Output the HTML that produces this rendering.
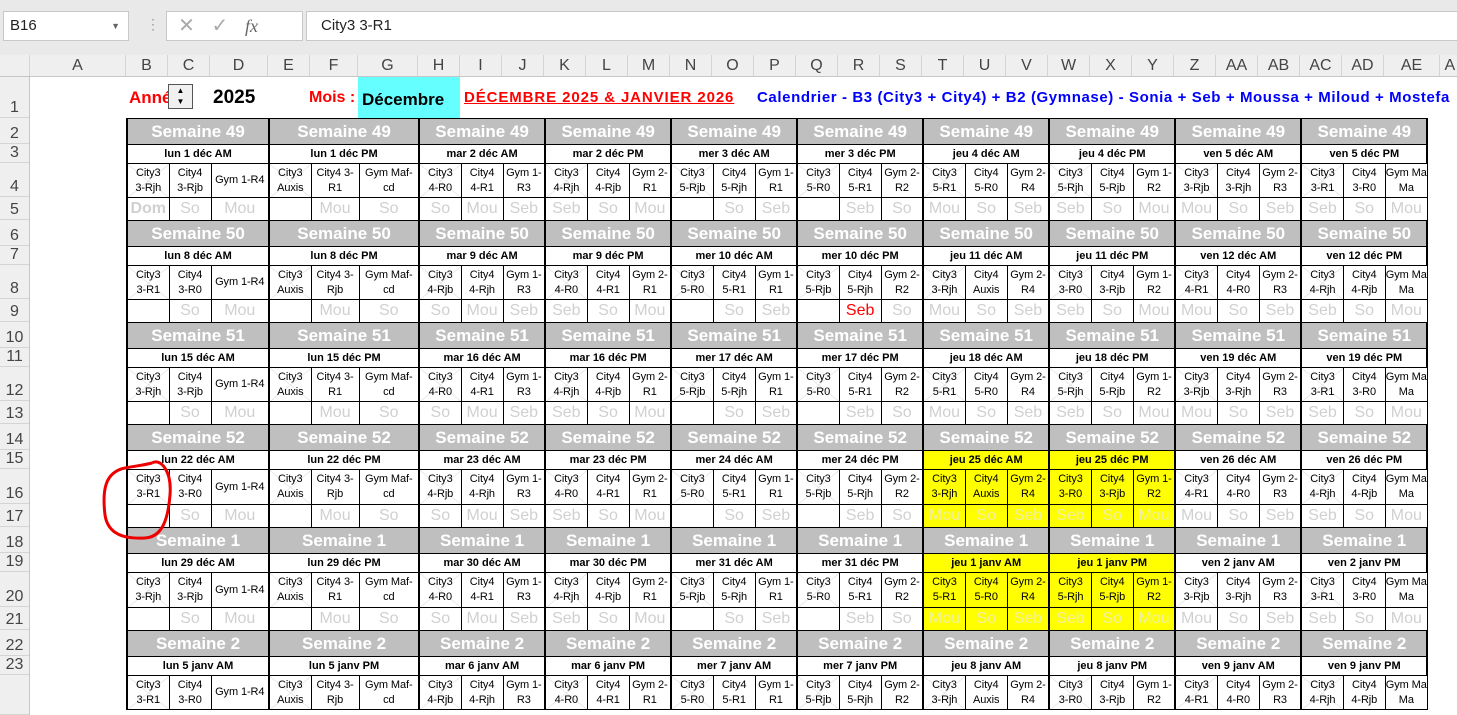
<!DOCTYPE html>
<html><head><meta charset="utf-8"><style>
*{box-sizing:border-box}
body{margin:0;width:1457px;height:687px;overflow:hidden;background:#fff;font-family:"Liberation Sans",sans-serif;position:relative}
.top{position:absolute;left:0;top:0;width:1457px;height:55px;background:#e9e9e9}
.box{position:absolute;background:#fff;border:1px solid #c8c8c8}
.ch{position:absolute;top:55px;left:0;height:22px;display:flex;background:#efefef;border-bottom:1px solid #c6c6c6}
.ch div{border-right:1px solid #d4d4d4;text-align:center;font-size:16px;color:#444;line-height:22px;flex:none}
.rh{position:absolute;left:0;top:77px;width:30px;display:flex;flex-direction:column;background:#efefef;border-right:1px solid #c6c6c6}
.rh div{border-bottom:1px solid #d4d4d4;font-size:16px;color:#444;text-align:center;display:flex;align-items:flex-end;justify-content:center;flex:none;line-height:18px}
table{position:absolute;left:126px;top:118px;border-collapse:collapse;table-layout:fixed;width:1314px}
td{border:1px solid #000;padding:0;text-align:center;overflow:hidden;white-space:nowrap}
tr.s td{background:#bfbfbf;color:#fff;font-weight:bold;font-size:17px;height:26px;border-left:2px solid #000;border-right:2px solid #000}
tr.d td{font-weight:bold;font-size:11px;height:19px;border-left:2px solid #000;border-right:2px solid #000}
tr.c td{font-size:11px;line-height:15px;height:34px;letter-spacing:-0.1px}
tr.c.t td{height:35px}
tr.n td{font-size:16px;color:#d0d0d0;height:23px}
td.g{border-left:2px solid #000}
td.x{background:linear-gradient(to top right,transparent calc(50% - .6px),#ddd 50%,transparent calc(50% + .6px)),linear-gradient(to bottom right,transparent calc(50% - .6px),#ddd 50%,transparent calc(50% + .6px))}
td.y,td.x.y{background:#ffff00}
tr.n td.y{color:#f0f0a0}
</style></head><body>
<div class="top"></div>
<div class="box" style="left:3px;top:11px;width:126px;height:30px;font-size:15px;line-height:28px;padding-left:6px;color:#222">B16<span style="position:absolute;right:8px;top:0;font-size:9px;color:#666">▼</span></div>
<div style="position:absolute;left:146px;top:16px;color:#999;font-size:14px">⋮</div>
<div class="box" style="left:166px;top:11px;width:137px;height:30px;color:#aaa;font-size:20px;line-height:28px">&nbsp;&nbsp;✕&nbsp;&nbsp;&nbsp;✓&nbsp;&nbsp;&nbsp;<i style="font-family:'Liberation Serif',serif;color:#666;font-size:18px">fx</i></div>
<div class="box" style="left:306px;top:11px;width:1160px;height:30px;font-size:15px;line-height:28px;padding-left:14px;color:#222">City3 3-R1</div>
<div class="ch"><div style="width:30px"></div><div style="width:96px">A</div><div style="width:42px">B</div><div style="width:42px">C</div><div style="width:58px">D</div><div style="width:42px">E</div><div style="width:48px">F</div><div style="width:60px">G</div><div style="width:42px">H</div><div style="width:42px">I</div><div style="width:42px">J</div><div style="width:42px">K</div><div style="width:42px">L</div><div style="width:42px">M</div><div style="width:42px">N</div><div style="width:42px">O</div><div style="width:42px">P</div><div style="width:42px">Q</div><div style="width:42px">R</div><div style="width:42px">S</div><div style="width:42px">T</div><div style="width:42px">U</div><div style="width:42px">V</div><div style="width:42px">W</div><div style="width:42px">X</div><div style="width:42px">Y</div><div style="width:42px">Z</div><div style="width:42px">AA</div><div style="width:42px">AB</div><div style="width:42px">AC</div><div style="width:42px">AD</div><div style="width:56px">AE</div><div style="width:40px;text-align:left">&nbsp;A</div></div>
<div class="rh">
<div style="height:41px">1</div>
<div style="height:26px">2</div><div style="height:19px">3</div><div style="height:34px">4</div><div style="height:23px">5</div>
<div style="height:26px">6</div><div style="height:19px">7</div><div style="height:34px">8</div><div style="height:23px">9</div>
<div style="height:26px">10</div><div style="height:19px">11</div><div style="height:34px">12</div><div style="height:23px">13</div>
<div style="height:26px">14</div><div style="height:19px">15</div><div style="height:35px">16</div><div style="height:23px">17</div>
<div style="height:26px">18</div><div style="height:19px">19</div><div style="height:35px">20</div><div style="height:23px">21</div>
<div style="height:26px">22</div><div style="height:19px">23</div><div style="height:40px"></div>
</div>
<div style="position:absolute;left:129px;top:88px;color:#f00;font-weight:bold;font-size:17px">Année :</div>
<div style="position:absolute;left:168px;top:84px;width:25px;height:25px;background:#f0f0f0;border:1px solid #555;font-size:8px;line-height:11px;text-align:center">▲<br>▼</div>
<div style="position:absolute;left:213px;top:87px;font-weight:bold;font-size:19px">2025</div>
<div style="position:absolute;left:309px;top:89px;color:#f00;font-weight:bold;font-size:16px">Mois :</div>
<div style="position:absolute;left:358px;top:77px;width:102px;height:41px;background:#66ffff;font-weight:bold;font-size:17px;padding:13px 0 0 4px">Décembre</div>
<div style="position:absolute;left:464px;top:89px;color:#f00;font-weight:bold;font-size:15px;letter-spacing:0.9px;text-decoration:underline">DÉCEMBRE 2025 &amp; JANVIER 2026</div>
<div style="position:absolute;left:757px;top:89px;color:#00f;font-weight:bold;font-size:15px;white-space:nowrap;letter-spacing:0.6px">Calendrier - B3 (City3 + City4) + B2 (Gymnase) - Sonia + Seb + Moussa + Miloud + Mostefa</div>
<table>
<colgroup><col style="width:42px"><col style="width:42px"><col style="width:58px"><col style="width:42px"><col style="width:48px"><col style="width:60px"><col span="24" style="width:42px"><col style="width:56px"></colgroup>
<tr class="s"><td colspan="3">Semaine 49</td><td colspan="3">Semaine 49</td><td colspan="3">Semaine 49</td><td colspan="3">Semaine 49</td><td colspan="3">Semaine 49</td><td colspan="3">Semaine 49</td><td colspan="3">Semaine 49</td><td colspan="3">Semaine 49</td><td colspan="3">Semaine 49</td><td colspan="3">Semaine 49</td></tr>
<tr class="d"><td colspan="3">lun 1 déc AM</td><td colspan="3">lun 1 déc PM</td><td colspan="3">mar 2 déc AM</td><td colspan="3">mar 2 déc PM</td><td colspan="3">mer 3 déc AM</td><td colspan="3">mer 3 déc PM</td><td colspan="3">jeu 4 déc AM</td><td colspan="3">jeu 4 déc PM</td><td colspan="3">ven 5 déc AM</td><td colspan="3">ven 5 déc PM</td></tr>
<tr class="c"><td class="g x">City3<br>3-Rjh</td><td>City4<br>3-Rjb</td><td>Gym 1-R4</td><td class="g x">City3<br>Auxis</td><td>City4 3-<br>R1</td><td>Gym Maf-<br>cd</td><td class="g x">City3<br>4-R0</td><td>City4<br>4-R1</td><td>Gym 1-<br>R3</td><td class="g x">City3<br>4-Rjh</td><td>City4<br>4-Rjb</td><td>Gym 2-<br>R1</td><td class="g x">City3<br>5-Rjb</td><td>City4<br>5-Rjh</td><td>Gym 1-<br>R1</td><td class="g x">City3<br>5-R0</td><td>City4<br>5-R1</td><td>Gym 2-<br>R2</td><td class="g x">City3<br>5-R1</td><td>City4<br>5-R0</td><td>Gym 2-<br>R4</td><td class="g x">City3<br>5-Rjh</td><td>City4<br>5-Rjb</td><td>Gym 1-<br>R2</td><td class="g x">City3<br>3-Rjb</td><td>City4<br>3-Rjh</td><td>Gym 2-<br>R3</td><td class="g x">City3<br>3-R1</td><td>City4<br>3-R0</td><td>Gym Maf-<br>Ma</td></tr>
<tr class="n"><td class="g" style="font-weight:bold">Dom</td><td>So</td><td>Mou</td><td class="g"></td><td>Mou</td><td>So</td><td class="g">So</td><td>Mou</td><td>Seb</td><td class="g">Seb</td><td>So</td><td>Mou</td><td class="g"></td><td>So</td><td>Seb</td><td class="g"></td><td>Seb</td><td>So</td><td class="g">Mou</td><td>So</td><td>Seb</td><td class="g">Seb</td><td>So</td><td>Mou</td><td class="g">Mou</td><td>So</td><td>Seb</td><td class="g">Seb</td><td>So</td><td>Mou</td></tr>
<tr class="s"><td colspan="3">Semaine 50</td><td colspan="3">Semaine 50</td><td colspan="3">Semaine 50</td><td colspan="3">Semaine 50</td><td colspan="3">Semaine 50</td><td colspan="3">Semaine 50</td><td colspan="3">Semaine 50</td><td colspan="3">Semaine 50</td><td colspan="3">Semaine 50</td><td colspan="3">Semaine 50</td></tr>
<tr class="d"><td colspan="3">lun 8 déc AM</td><td colspan="3">lun 8 déc PM</td><td colspan="3">mar 9 déc AM</td><td colspan="3">mar 9 déc PM</td><td colspan="3">mer 10 déc AM</td><td colspan="3">mer 10 déc PM</td><td colspan="3">jeu 11 déc AM</td><td colspan="3">jeu 11 déc PM</td><td colspan="3">ven 12 déc AM</td><td colspan="3">ven 12 déc PM</td></tr>
<tr class="c"><td class="g x">City3<br>3-R1</td><td>City4<br>3-R0</td><td>Gym 1-R4</td><td class="g x">City3<br>Auxis</td><td>City4 3-<br>Rjb</td><td>Gym Maf-<br>cd</td><td class="g x">City3<br>4-Rjb</td><td>City4<br>4-Rjh</td><td>Gym 1-<br>R3</td><td class="g x">City3<br>4-R0</td><td>City4<br>4-R1</td><td>Gym 2-<br>R1</td><td class="g x">City3<br>5-R0</td><td>City4<br>5-R1</td><td>Gym 1-<br>R1</td><td class="g x">City3<br>5-Rjb</td><td>City4<br>5-Rjh</td><td>Gym 2-<br>R2</td><td class="g x">City3<br>3-Rjh</td><td>City4<br>Auxis</td><td>Gym 2-<br>R4</td><td class="g x">City3<br>3-R0</td><td>City4<br>3-Rjb</td><td>Gym 1-<br>R2</td><td class="g x">City3<br>4-R1</td><td>City4<br>4-R0</td><td>Gym 2-<br>R3</td><td class="g x">City3<br>4-Rjh</td><td>City4<br>4-Rjb</td><td>Gym Maf-<br>Ma</td></tr>
<tr class="n"><td class="g"></td><td>So</td><td>Mou</td><td class="g"></td><td>Mou</td><td>So</td><td class="g">So</td><td>Mou</td><td>Seb</td><td class="g">Seb</td><td>So</td><td>Mou</td><td class="g"></td><td>So</td><td>Seb</td><td class="g"></td><td style="color:#f00">Seb</td><td>So</td><td class="g">Mou</td><td>So</td><td>Seb</td><td class="g">Seb</td><td>So</td><td>Mou</td><td class="g">Mou</td><td>So</td><td>Seb</td><td class="g">Seb</td><td>So</td><td>Mou</td></tr>
<tr class="s"><td colspan="3">Semaine 51</td><td colspan="3">Semaine 51</td><td colspan="3">Semaine 51</td><td colspan="3">Semaine 51</td><td colspan="3">Semaine 51</td><td colspan="3">Semaine 51</td><td colspan="3">Semaine 51</td><td colspan="3">Semaine 51</td><td colspan="3">Semaine 51</td><td colspan="3">Semaine 51</td></tr>
<tr class="d"><td colspan="3">lun 15 déc AM</td><td colspan="3">lun 15 déc PM</td><td colspan="3">mar 16 déc AM</td><td colspan="3">mar 16 déc PM</td><td colspan="3">mer 17 déc AM</td><td colspan="3">mer 17 déc PM</td><td colspan="3">jeu 18 déc AM</td><td colspan="3">jeu 18 déc PM</td><td colspan="3">ven 19 déc AM</td><td colspan="3">ven 19 déc PM</td></tr>
<tr class="c"><td class="g x">City3<br>3-Rjh</td><td>City4<br>3-Rjb</td><td>Gym 1-R4</td><td class="g x">City3<br>Auxis</td><td>City4 3-<br>R1</td><td>Gym Maf-<br>cd</td><td class="g x">City3<br>4-R0</td><td>City4<br>4-R1</td><td>Gym 1-<br>R3</td><td class="g x">City3<br>4-Rjh</td><td>City4<br>4-Rjb</td><td>Gym 2-<br>R1</td><td class="g x">City3<br>5-Rjb</td><td>City4<br>5-Rjh</td><td>Gym 1-<br>R1</td><td class="g x">City3<br>5-R0</td><td>City4<br>5-R1</td><td>Gym 2-<br>R2</td><td class="g x">City3<br>5-R1</td><td>City4<br>5-R0</td><td>Gym 2-<br>R4</td><td class="g x">City3<br>5-Rjh</td><td>City4<br>5-Rjb</td><td>Gym 1-<br>R2</td><td class="g x">City3<br>3-Rjb</td><td>City4<br>3-Rjh</td><td>Gym 2-<br>R3</td><td class="g x">City3<br>3-R1</td><td>City4<br>3-R0</td><td>Gym Maf-<br>Ma</td></tr>
<tr class="n"><td class="g"></td><td>So</td><td>Mou</td><td class="g"></td><td>Mou</td><td>So</td><td class="g">So</td><td>Mou</td><td>Seb</td><td class="g">Seb</td><td>So</td><td>Mou</td><td class="g"></td><td>So</td><td>Seb</td><td class="g"></td><td>Seb</td><td>So</td><td class="g">Mou</td><td>So</td><td>Seb</td><td class="g">Seb</td><td>So</td><td>Mou</td><td class="g">Mou</td><td>So</td><td>Seb</td><td class="g">Seb</td><td>So</td><td>Mou</td></tr>
<tr class="s"><td colspan="3">Semaine 52</td><td colspan="3">Semaine 52</td><td colspan="3">Semaine 52</td><td colspan="3">Semaine 52</td><td colspan="3">Semaine 52</td><td colspan="3">Semaine 52</td><td colspan="3">Semaine 52</td><td colspan="3">Semaine 52</td><td colspan="3">Semaine 52</td><td colspan="3">Semaine 52</td></tr>
<tr class="d"><td colspan="3">lun 22 déc AM</td><td colspan="3">lun 22 déc PM</td><td colspan="3">mar 23 déc AM</td><td colspan="3">mar 23 déc PM</td><td colspan="3">mer 24 déc AM</td><td colspan="3">mer 24 déc PM</td><td colspan="3" class="y">jeu 25 déc AM</td><td colspan="3" class="y">jeu 25 déc PM</td><td colspan="3">ven 26 déc AM</td><td colspan="3">ven 26 déc PM</td></tr>
<tr class="c t"><td class="g x">City3<br>3-R1</td><td>City4<br>3-R0</td><td>Gym 1-R4</td><td class="g x">City3<br>Auxis</td><td>City4 3-<br>Rjb</td><td>Gym Maf-<br>cd</td><td class="g x">City3<br>4-Rjb</td><td>City4<br>4-Rjh</td><td>Gym 1-<br>R3</td><td class="g x">City3<br>4-R0</td><td>City4<br>4-R1</td><td>Gym 2-<br>R1</td><td class="g x">City3<br>5-R0</td><td>City4<br>5-R1</td><td>Gym 1-<br>R1</td><td class="g x">City3<br>5-Rjb</td><td>City4<br>5-Rjh</td><td>Gym 2-<br>R2</td><td class="g y">City3<br>3-Rjh</td><td class="y">City4<br>Auxis</td><td class="y">Gym 2-<br>R4</td><td class="g y">City3<br>3-R0</td><td class="y">City4<br>3-Rjb</td><td class="y">Gym 1-<br>R2</td><td class="g x">City3<br>4-R1</td><td>City4<br>4-R0</td><td>Gym 2-<br>R3</td><td class="g x">City3<br>4-Rjh</td><td>City4<br>4-Rjb</td><td>Gym Maf-<br>Ma</td></tr>
<tr class="n"><td class="g"></td><td>So</td><td>Mou</td><td class="g"></td><td>Mou</td><td>So</td><td class="g">So</td><td>Mou</td><td>Seb</td><td class="g">Seb</td><td>So</td><td>Mou</td><td class="g"></td><td>So</td><td>Seb</td><td class="g"></td><td>Seb</td><td>So</td><td class="g y">Mou</td><td class="y">So</td><td class="y">Seb</td><td class="g y">Seb</td><td class="y">So</td><td class="y">Mou</td><td class="g">Mou</td><td>So</td><td>Seb</td><td class="g">Seb</td><td>So</td><td>Mou</td></tr>
<tr class="s"><td colspan="3">Semaine 1</td><td colspan="3">Semaine 1</td><td colspan="3">Semaine 1</td><td colspan="3">Semaine 1</td><td colspan="3">Semaine 1</td><td colspan="3">Semaine 1</td><td colspan="3">Semaine 1</td><td colspan="3">Semaine 1</td><td colspan="3">Semaine 1</td><td colspan="3">Semaine 1</td></tr>
<tr class="d"><td colspan="3">lun 29 déc AM</td><td colspan="3">lun 29 déc PM</td><td colspan="3">mar 30 déc AM</td><td colspan="3">mar 30 déc PM</td><td colspan="3">mer 31 déc AM</td><td colspan="3">mer 31 déc PM</td><td colspan="3" class="y">jeu 1 janv AM</td><td colspan="3" class="y">jeu 1 janv PM</td><td colspan="3">ven 2 janv AM</td><td colspan="3">ven 2 janv PM</td></tr>
<tr class="c t"><td class="g x">City3<br>3-Rjh</td><td>City4<br>3-Rjb</td><td>Gym 1-R4</td><td class="g x">City3<br>Auxis</td><td>City4 3-<br>R1</td><td>Gym Maf-<br>cd</td><td class="g x">City3<br>4-R0</td><td>City4<br>4-R1</td><td>Gym 1-<br>R3</td><td class="g x">City3<br>4-Rjh</td><td>City4<br>4-Rjb</td><td>Gym 2-<br>R1</td><td class="g x">City3<br>5-Rjb</td><td>City4<br>5-Rjh</td><td>Gym 1-<br>R1</td><td class="g x">City3<br>5-R0</td><td>City4<br>5-R1</td><td>Gym 2-<br>R2</td><td class="g y">City3<br>5-R1</td><td class="y">City4<br>5-R0</td><td class="y">Gym 2-<br>R4</td><td class="g y">City3<br>5-Rjh</td><td class="y">City4<br>5-Rjb</td><td class="y">Gym 1-<br>R2</td><td class="g x">City3<br>3-Rjb</td><td>City4<br>3-Rjh</td><td>Gym 2-<br>R3</td><td class="g x">City3<br>3-R1</td><td>City4<br>3-R0</td><td>Gym Maf-<br>Ma</td></tr>
<tr class="n"><td class="g"></td><td>So</td><td>Mou</td><td class="g"></td><td>Mou</td><td>So</td><td class="g">So</td><td>Mou</td><td>Seb</td><td class="g">Seb</td><td>So</td><td>Mou</td><td class="g"></td><td>So</td><td>Seb</td><td class="g"></td><td>Seb</td><td>So</td><td class="g y">Mou</td><td class="y">So</td><td class="y">Seb</td><td class="g y">Seb</td><td class="y">So</td><td class="y">Mou</td><td class="g">Mou</td><td>So</td><td>Seb</td><td class="g">Seb</td><td>So</td><td>Mou</td></tr>
<tr class="s"><td colspan="3">Semaine 2</td><td colspan="3">Semaine 2</td><td colspan="3">Semaine 2</td><td colspan="3">Semaine 2</td><td colspan="3">Semaine 2</td><td colspan="3">Semaine 2</td><td colspan="3">Semaine 2</td><td colspan="3">Semaine 2</td><td colspan="3">Semaine 2</td><td colspan="3">Semaine 2</td></tr>
<tr class="d"><td colspan="3">lun 5 janv AM</td><td colspan="3">lun 5 janv PM</td><td colspan="3">mar 6 janv AM</td><td colspan="3">mar 6 janv PM</td><td colspan="3">mer 7 janv AM</td><td colspan="3">mer 7 janv PM</td><td colspan="3">jeu 8 janv AM</td><td colspan="3">jeu 8 janv PM</td><td colspan="3">ven 9 janv AM</td><td colspan="3">ven 9 janv PM</td></tr>
<tr class="c"><td class="g x">City3<br>3-R1</td><td>City4<br>3-R0</td><td>Gym 1-R4</td><td class="g x">City3<br>Auxis</td><td>City4 3-<br>Rjb</td><td>Gym Maf-<br>cd</td><td class="g x">City3<br>4-Rjb</td><td>City4<br>4-Rjh</td><td>Gym 1-<br>R3</td><td class="g x">City3<br>4-R0</td><td>City4<br>4-R1</td><td>Gym 2-<br>R1</td><td class="g x">City3<br>5-R0</td><td>City4<br>5-R1</td><td>Gym 1-<br>R1</td><td class="g x">City3<br>5-Rjb</td><td>City4<br>5-Rjh</td><td>Gym 2-<br>R2</td><td class="g x">City3<br>3-Rjh</td><td>City4<br>Auxis</td><td>Gym 2-<br>R4</td><td class="g x">City3<br>3-R0</td><td>City4<br>3-Rjb</td><td>Gym 1-<br>R2</td><td class="g x">City3<br>4-R1</td><td>City4<br>4-R0</td><td>Gym 2-<br>R3</td><td class="g x">City3<br>4-Rjh</td><td>City4<br>4-Rjb</td><td>Gym Maf-<br>Ma</td></tr>
</table>
<svg style="position:absolute;left:0;top:0" width="1457" height="687"><path d="M152 463 C160 458 172 470 170 495 C168 520 162 537 145 538 C125 539 108 535 105 515 C102 490 105 472 125 468 C135 466 145 465 152 463" fill="none" stroke="#e00" stroke-width="3"/></svg>
</body></html>
